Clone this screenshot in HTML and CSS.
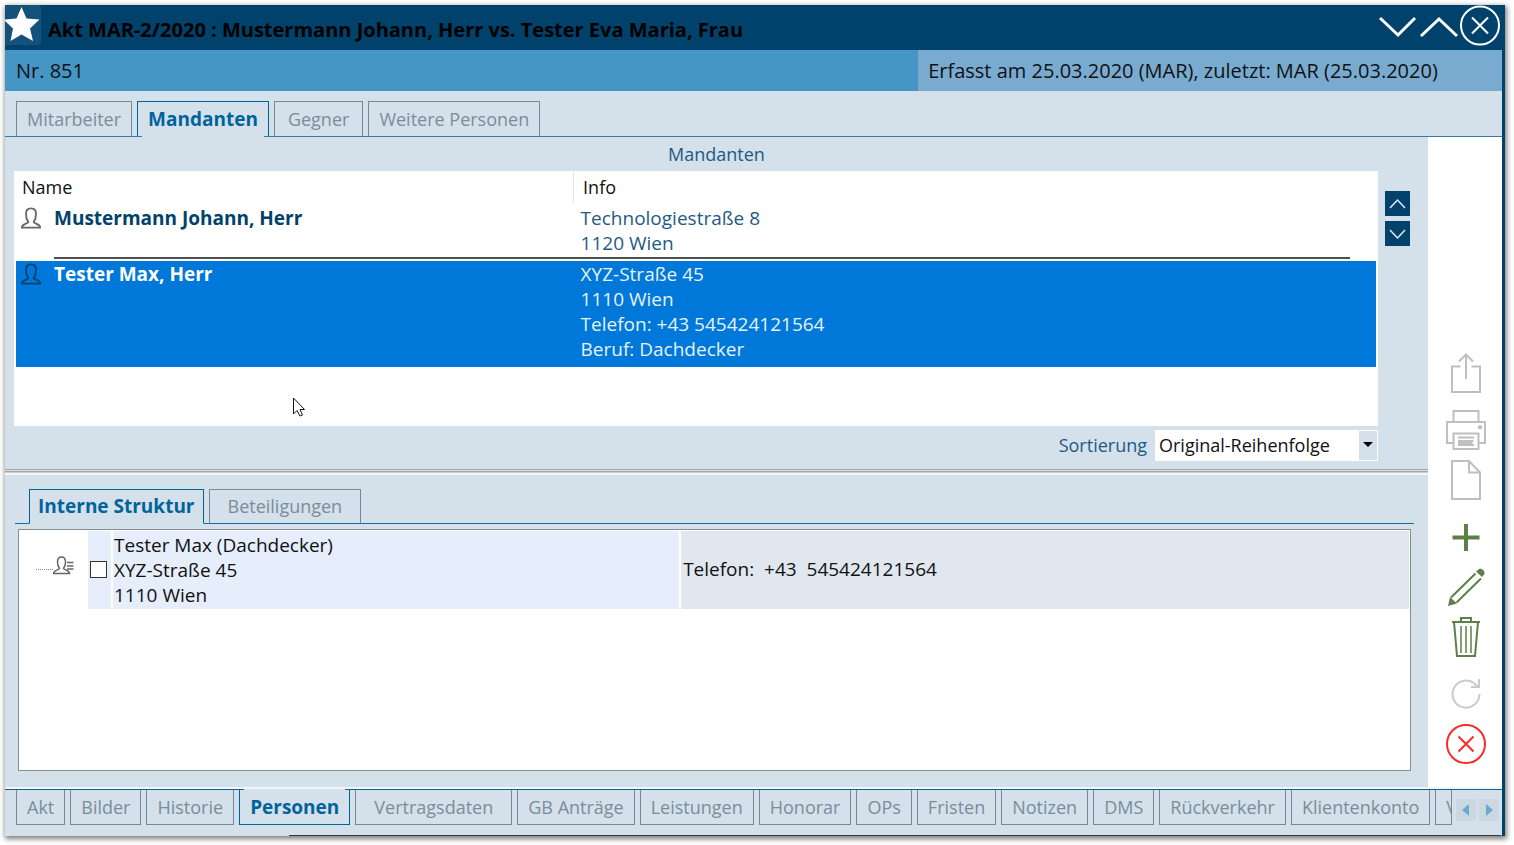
FILE: index.html
```
<!DOCTYPE html>
<html lang="de">
<head>
<meta charset="utf-8">
<title>Akt MAR-2/2020</title>
<link rel="stylesheet" href="styles.css">
</head>
<body>
<svg class="symbols" aria-hidden="true">
  <symbol id="person" viewBox="0 0 22 24">
    <path d="M8 16.5 C6.2 14 5.5 11.500 5.500 7.500 C5.500 3.500 7.500 1.500 11 1.500 C14.500 1.500 16.500 3.500 16.500 7.500 C16.500 11.500 15.800 14 14 16.500 C15 18.500 21 18 21 22.500 H1 C1 18 7 18.500 8 16.500 Z"/>
  </symbol>
</svg>
<div class="window">
  <header class="titlebar">
    <span class="star"><svg viewBox="0 0 36 40"><path d="M16.500 2 L21.500 13.500 L34.500 14.500 L25 23.500 L28 36 L16.500 29.500 L5.500 36 L8 23.500 L0 16 V14.500 L11.500 13.500 Z"/></svg></span>
    <h1 class="title">Akt MAR-2/2020 : Mustermann Johann, Herr vs. Tester Eva Maria, Frau</h1>
    <div class="window-buttons">
      <button class="plain" aria-label="Nächster"><svg class="chev" viewBox="0 0 40 40"><path d="M1 12 L19 29 L36 12"/></svg></button>
      <button class="plain" aria-label="Vorheriger"><svg class="chev" viewBox="0 0 40 40"><path d="M2 30 L20 13 L38 30"/></svg></button>
      <button class="plain" aria-label="Schließen"><svg class="close" viewBox="0 0 42 42"><circle cx="21" cy="20.500" r="19"/><path d="M13 12.500 L29 28.500 M29 12.500 L13 28.500"/></svg></button>
    </div>
  </header>
  <div class="infobar">
    <span class="number">Nr. 851</span>
    <span class="recorded">Erfasst am 25.03.2020 (MAR), zuletzt: MAR (25.03.2020)</span>
  </div>
  <nav class="tabs top-tabs">
    <button class="tab">Mitarbeiter</button>
    <button class="tab active">Mandanten</button>
    <button class="tab wide">Gegner</button>
    <button class="tab">Weitere Personen</button>
  </nav>
  <div class="main">
    <div class="content">
      <section class="clients">
        <h2 class="caption">Mandanten</h2>
        <div class="client-area">
          <div class="client-list">
            <table class="client-table">
              <thead><tr><th class="col-name">Name</th><th class="col-info">Info</th></tr></thead>
              <tbody>
                <tr>
                  <td><div class="person"><svg class="person-icon"><use href="#person"/></svg><strong>Mustermann Johann, Herr</strong></div></td>
                  <td>Technologiestraße 8<br>1120 Wien</td>
                </tr>
                <tr><td class="rule-cell" colspan="2"><hr class="rule"></td></tr>
                <tr class="selected">
                  <td><div class="person"><svg class="person-icon"><use href="#person"/></svg><strong>Tester Max, Herr</strong></div></td>
                  <td>XYZ-Straße 45<br>1110 Wien<br>Telefon: +43 545424121564<br>Beruf: Dachdecker</td>
                </tr>
              </tbody>
            </table>
            <svg class="pointer" viewBox="0 0 13 20"><path d="M1.500 1 V17 L5 13.500 L8 19 L10.500 18 L8 12.500 H12.500 Z"/></svg>
          </div>
          <div class="movers">
            <button class="mover" aria-label="Nach oben"><svg viewBox="0 0 25 25"><path d="M5 17 L12.500 9 L20 17"/></svg></button>
            <button class="mover" aria-label="Nach unten"><svg viewBox="0 0 25 25"><path d="M5 9 L12.500 17 L20 9"/></svg></button>
          </div>
        </div>
        <div class="sort">
          <label for="sort">Sortierung</label>
          <span class="select-wrap">
            <select id="sort"><option>Original-Reihenfolge</option></select>
            <span class="select-arrow"><svg viewBox="0 0 10 6"><path d="M0 0 H10 L5 5 Z"/></svg></span>
          </span>
        </div>
      </section>
      <div class="splitter"></div>
      <section class="structure">
        <nav class="tabs sub-tabs">
          <button class="tab active">Interne Struktur</button>
          <button class="tab wider">Beteiligungen</button>
        </nav>
        <div class="tree">
          <div class="tree-row">
            <div class="node">
              <span class="branch"></span>
              <svg class="node-icon" viewBox="0 0 22 19"><path d="M6.500 12.500 C5 10.500 4.500 9 4.500 6 C4.500 3 6 1 8.500 1 C11 1 12.500 3 12.500 6 C12.500 9 12 10.500 10.500 12.500 C11.500 14.500 16.500 14 16.500 17.500 H0.500 C0.500 14 5.500 14.500 6.500 12.500 Z M14 6.500 H20.500 M14 10 H20.500 M14 13 H20.500"/></svg>
            </div>
            <div class="check"><input type="checkbox" id="member"></div>
            <label class="member" for="member">Tester Max (Dachdecker)<br>XYZ-Straße 45<br>1110 Wien</label>
            <div class="phone">Telefon:  +43  545424121564</div>
          </div>
        </div>
      </section>
    </div>
    <aside class="actions">
      <div class="group">
        <button class="plain" aria-label="Exportieren"><svg class="icon grey" viewBox="0 0 40 40"><path d="M14.500 13.500 H6 V39 H34 V13.500 H25.500 M20 26 V2 M13 8.500 L20 1.500 L27 8.500"/></svg></button>
      </div>
      <div class="group">
        <button class="plain" aria-label="Drucken"><svg class="icon grey" viewBox="0 0 40 40"><path d="M7.500 12 V1 H32.500 V12 M7.500 33 H1 V12 H39 V33 H32.500 M7.500 23.500 H32.500 V39 H7.500 Z"/><path d="M12 27.500 H28 M12 31.500 H27 M12 35 H28"/><path class="dot" d="M32 15.500 H36 V19 H32 Z M12 30 H28 L26 33 L28 36 H12 Z"/></svg></button>
        <button class="plain" aria-label="Neu"><svg class="icon grey" viewBox="0 0 40 40"><path d="M6 1 H23 L34 12.500 V39 H6 Z M23 1 V12.500 H34"/></svg></button>
      </div>
      <div class="group">
        <button class="plain" aria-label="Hinzufügen"><svg class="icon green thick" viewBox="0 0 40 40"><path d="M20 7 V34 M6.500 20.500 H33.500"/></svg></button>
        <button class="plain" aria-label="Bearbeiten"><svg class="icon green" viewBox="0 0 40 40"><path d="M5 30.500 L29.500 6.500 M10.500 35.500 L35 11.500"/><path class="tip" d="M30 4.500 L33 2 C36 1 39 4 38.500 7 L36 10 Z M2 39 L4 30 L11 36.500 Z"/></svg></button>
        <button class="plain" aria-label="Löschen"><svg class="icon green" viewBox="0 0 40 40"><path d="M6 5 H34 M15 5 V1 H25 V5 M8 5 L11 39 H29 L32 5"/><path class="thin" d="M15 9 V36 M20 9 V36 M25 9 V36"/></svg></button>
      </div>
      <div class="group">
        <button class="plain" aria-label="Aktualisieren"><svg class="icon pale" viewBox="0 0 40 40"><path d="M33.500 20 A13.500 13.500 0 1 1 29.500 10.500 L33 13 M33 5 V13 H25"/></svg></button>
        <button class="plain" aria-label="Abbrechen"><svg class="icon red" viewBox="0 0 40 40"><circle cx="20" cy="20" r="19"/><path d="M12.500 12.500 L27.500 27.500 M27.500 12.500 L12.500 27.500"/></svg></button>
      </div>
    </aside>
  </div>
  <footer class="bottom">
    <nav class="tabs bottom-tabs">
      <button class="tab">Akt</button>
      <button class="tab">Bilder</button>
      <button class="tab">Historie</button>
      <button class="tab active">Personen</button>
      <button class="tab wider">Vertragsdaten</button>
      <button class="tab">GB Anträge</button>
      <button class="tab">Leistungen</button>
      <button class="tab">Honorar</button>
      <button class="tab">OPs</button>
      <button class="tab">Fristen</button>
      <button class="tab">Notizen</button>
      <button class="tab">DMS</button>
      <button class="tab">Rückverkehr</button>
      <button class="tab">Klientenkonto</button>
      <button class="tab cut">V</button>
    </nav>
    <div class="pager">
      <button class="page" aria-label="Zurück"><svg viewBox="0 0 20 22"><path d="M13 5 V17 L6 11 Z"/></svg></button>
      <button class="page" aria-label="Weiter"><svg viewBox="0 0 20 22"><path d="M7 5 V17 L14 11 Z"/></svg></button>
    </div>
  </footer>
</div>
</body>
</html>
```
FILE: styles.css
```
* {
  box-sizing: border-box;
}

body {
  margin: 0;
  padding: 5px 9px 9px 5px;
  min-height: 100vh;
  display: flex;
  background: #fff;
  color: #111;
  font: 18px/25px "Open Sans", "Noto Sans", sans-serif;
}

button,
select {
  font: inherit;
  color: inherit;
}

svg {
  display: block;
}

path,
circle {
  fill: none;
}

.symbols {
  position: absolute;
  width: 0;
  height: 0;
}

.window {
  flex: 1;
  min-width: 0;
  display: flex;
  flex-direction: column;
  background: #d4e0ea;
  border-right: 3px solid #00426b;
  box-shadow: 1px 2px 5px 1px rgba(0, 0, 0, 0.5);
}

.plain {
  display: block;
  padding: 0;
  border: 0;
  background: none;
}

/* Title bar */

.titlebar {
  display: flex;
  align-items: center;
  height: 45px;
  margin-right: -3px;
  padding-right: 4px;
  background: #00426b;
}

.star {
  align-self: flex-start;
  width: 36px;
  height: 40px;
  margin-right: 7px;
  border-radius: 0 3px 3px 0;
  background: #14527c;
}

.star path {
  fill: #fff;
}

.title {
  flex: 1;
  margin: 0;
  padding-top: 3px;
  color: #000;
  font-size: 20px;
  font-weight: 700;
}

.window-buttons {
  display: flex;
  align-self: flex-start;
}

.chev {
  width: 40px;
  height: 40px;
  stroke: #fff;
  stroke-width: 3;
}

.close {
  width: 42px;
  height: 42px;
  stroke: #fff;
  stroke-width: 2;
}

.infobar {
  display: flex;
  height: 41px;
  font-size: 20px;
  line-height: 42px;
  background: #4595c5;
}

.number {
  flex: 1;
  padding-left: 11px;
}

.recorded {
  width: 39%;
  padding-left: 10px;
  background: #79abd1;
  white-space: nowrap;
}

/* Tabs */

.tabs {
  display: flex;
  gap: 5px;
}

.tab {
  position: relative;
  height: 35px;
  padding: 0 10px;
  border: 1px solid #76899a;
  background: none;
  color: #7b8d9b;
  white-space: nowrap;
}

.tab.wide {
  padding: 0 13px;
}

.tab.wider {
  padding: 0 18px;
}

.tab.active {
  border-color: #00649c;
  color: #00649c;
  font-size: 19px;
  font-weight: 700;
}

.top-tabs {
  padding: 10px 11px 0;
  border-bottom: 1px solid #2f7ca9;
}

.top-tabs .tab {
  border-bottom: 0;
}

.top-tabs .active::after,
.bottom-tabs .active::after {
  content: "";
  position: absolute;
  left: 4px;
  right: 4px;
  height: 2px;
  background: #d4e0ea;
}

.top-tabs .active::after {
  bottom: -1px;
}

/* Main area */

.main {
  flex: 1;
  display: flex;
  border-bottom: 2px solid #f2f6f9;
}

.content {
  flex: 1;
  min-width: 0;
  display: flex;
  flex-direction: column;
}

.clients {
  display: flex;
  flex-direction: column;
  flex: 1 1 331px;
  color: #1f5a85;
}

.caption {
  margin: 0;
  padding: 5px 0 4px;
  font-size: 18px;
  font-weight: 400;
  text-align: center;
}

.client-area {
  flex: 1;
  display: flex;
  gap: 7px;
  padding: 0 18px 0 9px;
}

.client-list {
  position: relative;
  flex: 1;
  padding: 0 2px;
  background: #fff;
}

.client-table {
  width: 100%;
  border-collapse: collapse;
  font-size: 19px;
}

.client-table th {
  height: 32px;
  padding: 0 6px;
  color: #111;
  font-size: 18px;
  font-weight: 400;
  text-align: left;
}

.client-table .col-name {
  width: 41%;
}

.client-table .col-info {
  padding-left: 9px;
  border-left: 1px solid #e4e4e4;
}

.client-table td {
  padding: 3px 0 0 7px;
  vertical-align: top;
}

.client-table td:first-child {
  padding-left: 5px;
}

.client-table .rule-cell {
  padding: 1px 26px 2px 38px;
}

.client-table td.rule-cell:first-child {
  padding-left: 38px;
}

.rule {
  margin: 0;
  border: 0;
  border-top: 2px solid #4f4f4f;
}

.person {
  display: flex;
  gap: 13px;
  color: #00426b;
}

.person-icon {
  width: 20px;
  height: 24px;
  stroke: #666;
  stroke-width: 2;
}

.selected {
  background: #0078d9;
  color: #e6f2fd;
}

.client-table .selected td {
  padding-top: 1px;
  padding-bottom: 5px;
}

.selected .person {
  color: #fff;
}

.selected .person-icon {
  stroke: #0a3f70;
}

.pointer {
  position: absolute;
  left: 278px;
  bottom: 9px;
  width: 13px;
  height: 20px;
  stroke: #112;
}

.pointer path {
  fill: #fff;
}

.movers {
  display: flex;
  flex-direction: column;
  gap: 5px;
  padding-top: 20px;
}

.mover {
  width: 25px;
  height: 25px;
  padding: 0;
  border: 0;
  background: #00426b;
  stroke: #e3ecf3;
  stroke-width: 1.5;
}

.sort {
  display: flex;
  justify-content: flex-end;
  align-items: center;
  gap: 8px;
  height: 43px;
  padding: 0 50px 4px 0;
}

.select-wrap {
  position: relative;
  width: 223px;
}

.select-wrap select {
  display: block;
  width: 100%;
  height: 31px;
  padding: 0 20px 0 4px;
  border: 0;
  appearance: none;
  background: #fff;
  color: #111;
}

.select-arrow {
  position: absolute;
  top: 1px;
  right: 1px;
  bottom: 1px;
  width: 18px;
  display: flex;
  align-items: center;
  justify-content: center;
  background: #d4e0ea;
  pointer-events: none;
}

.select-arrow svg {
  width: 10px;
  height: 6px;
}

.select-arrow path {
  fill: #000;
}

.splitter {
  height: 6px;
  border-bottom: 2px solid #f4f7fa;
  background: linear-gradient(#a3a7ab 1px, #d8dde2 1px 2px, #a3a7ab 2px 3px, #c8cfd5 3px);
}

/* Internal structure */

.structure {
  display: flex;
  flex-direction: column;
  flex: 1 1 312px;
  padding: 14px 14px 16px 13px;
}

.sub-tabs {
  margin-left: -3px;
  padding-left: 14px;
  background: linear-gradient(#176d9f, #176d9f) 0 100% / 100% 1px no-repeat;
}

.sub-tabs .active {
  padding: 0 8px;
  border-bottom-color: #d4e0ea;
}

.sub-tabs .tab:not(.active) {
  border-bottom-color: #176d9f;
}

.tree {
  flex: 1;
  margin: 5px 3px 0 0;
  padding: 1px;
  border: 1px solid #868e96;
  background: #fff;
  font-size: 19px;
}

.tree-row {
  display: flex;
}

.node {
  width: 68px;
  display: flex;
  align-items: center;
  padding: 0 0 8px 16px;
}

.branch {
  width: 17px;
  margin-top: 7px;
  border-top: 1px dotted #888;
}

.node-icon {
  width: 22px;
  height: 19px;
  stroke: #666;
  stroke-width: 1.5;
}

.check {
  width: 23px;
  display: flex;
  align-items: center;
  margin-right: 2px;
  padding-left: 2px;
  background: #e6eefc;
}

.check input {
  width: 17px;
  height: 17px;
  margin: 0;
  appearance: none;
  border: 1px solid #333;
  background: #fff;
}

.member {
  flex: 566 1 0;
  margin-right: 2px;
  padding: 2px 0 1px 1px;
  background: #e6eefc;
}

.phone {
  flex: 727 1 0;
  display: flex;
  align-items: center;
  padding-left: 2px;
  background: #e0e7ef;
  white-space: pre;
}

/* Action icons */

.actions {
  width: 74px;
  display: flex;
  flex-direction: column;
  justify-content: flex-end;
  align-items: center;
  gap: 17px;
  padding: 0 0 23px 2px;
  background: #fff;
}

.group {
  display: flex;
  flex-direction: column;
  gap: 10px;
}

.icon {
  width: 40px;
  height: 40px;
  stroke-width: 2;
}

.grey {
  stroke: #bfbfbf;
}

.pale {
  stroke: #cacaca;
}

.green {
  stroke: #5d8048;
}

.red {
  stroke: #fb2a2a;
}

.thick {
  stroke-width: 4;
}

.thin {
  stroke-width: 1.5;
}

.dot {
  fill: #bfbfbf;
  stroke: none;
}

.tip {
  fill: #5d8048;
  stroke: none;
}

/* Bottom tabs */

.bottom {
  display: flex;
  height: 47px;
  background: linear-gradient(#343c48, #343c48) 100% 100% / 81% 1px no-repeat;
}

.bottom-tabs {
  flex: 1;
  min-width: 0;
  padding-left: 11px;
  border-top: 1px solid #14608f;
}

.bottom-tabs .tab {
  flex: none;
  border-top: 0;
}

.bottom-tabs .active::after {
  top: -1px;
}

.bottom-tabs .cut {
  flex: 0 1 19px;
  min-width: 0;
  padding-right: 0;
  overflow: hidden;
  text-align: left;
}

.pager {
  display: flex;
  gap: 3px;
  padding: 9px 3px 0 4px;
  border-top: 1px solid #14608f;
}

.page {
  width: 20px;
  height: 22px;
  padding: 0;
  border: 0;
  background: #cbd8e2;
}

.page path {
  fill: #69a9d3;
}
```
